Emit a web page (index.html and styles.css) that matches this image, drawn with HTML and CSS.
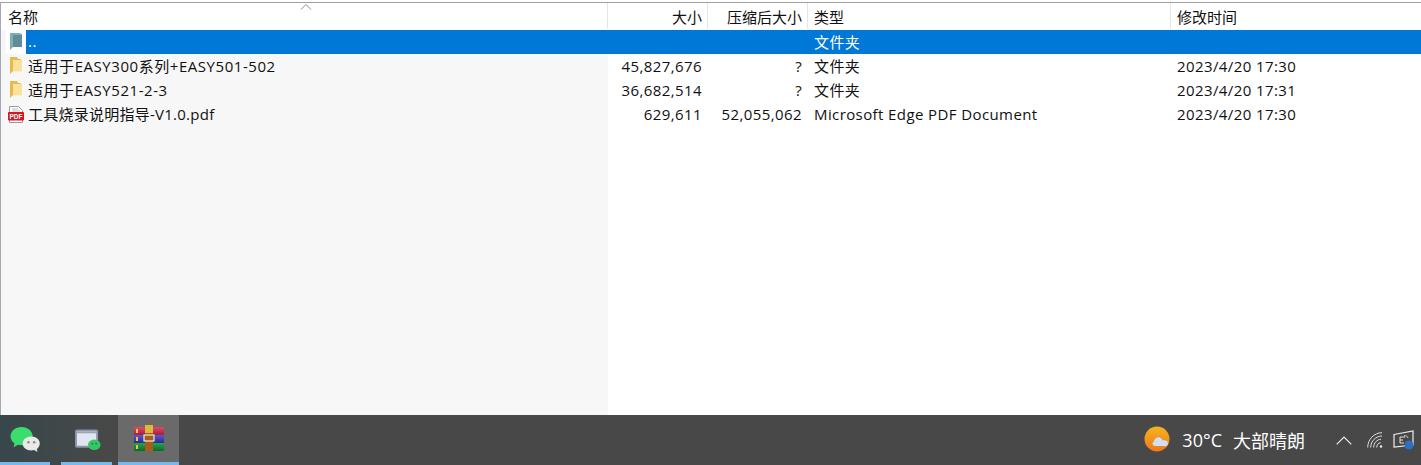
FILE: index.html
```html
<!DOCTYPE html>
<html lang="zh">
<head>
<meta charset="utf-8">
<title>WinRAR</title>
<link rel="stylesheet" href="styles.css">
</head>
<body>
<div class="window">
  <div class="table">
    <div class="row head">
      <div class="cell name">名称<svg class="sort" width="12" height="7" viewBox="0 0 12 7"><path d="M1 6.500 6 1.500l5 5" fill="none" stroke="#8a8a8a"/></svg></div>
      <div class="cell size">大小</div>
      <div class="cell packed">压缩后大小</div>
      <div class="cell type">类型</div>
      <div class="cell time last">修改时间</div>
    </div>
    <div class="row selected">
      <div class="cell name">
        <span class="icon-box"><svg class="folder" width="12" height="18" viewBox="0 0 12 18"><path d="M0 0h9l3 1v13H3l-3 3z" fill="#7fb0ae"/><path d="M3 2h9v12H3z" fill="#5f8e9a"/></svg></span>
        <span class="label">..</span>
      </div>
      <div class="cell size"></div>
      <div class="cell packed"></div>
      <div class="cell type cjk">文件夹</div>
      <div class="cell time last"></div>
    </div>
    <div class="row">
      <div class="cell name">
        <span class="icon-box"><svg class="folder" width="12" height="18" viewBox="0 0 12 18"><path d="M0 0h7l1 2h3v12H3l-3 3z" fill="#e9b84f"/><path d="M3 3h9v11.500H3z" fill="#fbe29c"/></svg></span>
        <span class="label">适用于EASY300系列+EASY501-502</span>
      </div>
      <div class="cell size">45,827,676</div>
      <div class="cell packed">?</div>
      <div class="cell type cjk">文件夹</div>
      <div class="cell time last">2023/4/20 17:30</div>
    </div>
    <div class="row">
      <div class="cell name">
        <span class="icon-box"><svg class="folder" width="12" height="18" viewBox="0 0 12 18"><path d="M0 0h7l1 2h3v12H3l-3 3z" fill="#e9b84f"/><path d="M3 3h9v11.500H3z" fill="#fbe29c"/></svg></span>
        <span class="label">适用于EASY521-2-3</span>
      </div>
      <div class="cell size">36,682,514</div>
      <div class="cell packed">?</div>
      <div class="cell type cjk">文件夹</div>
      <div class="cell time last">2023/4/20 17:31</div>
    </div>
    <div class="row">
      <div class="cell name">
        <span class="icon-box"><svg width="16" height="17" viewBox="0 0 16 17"><path d="M1.500.5h9l4 4V16.500h-13z" fill="#fff" stroke="#999"/><path d="M4 3h6M4 5h8" stroke="#bbb"/><rect y="6" width="16" height="8.500" rx="1" fill="#d8141c"/><text x="8" y="12.800" class="pdf-tag">PDF</text></svg></span>
        <span class="label tight">工具烧录说明指导-V1.0.pdf</span>
      </div>
      <div class="cell size">629,611</div>
      <div class="cell packed">52,055,062</div>
      <div class="cell type">Microsoft Edge PDF Document</div>
      <div class="cell time last">2023/4/20 17:30</div>
    </div>
    <div class="filler"></div>
  </div>
  <div class="taskbar">
    <div class="task first">
      <svg class="wechat" width="33" height="27" viewBox="0 0 34 28"><path d="M13 2C6.500 2 1.500 6.300 1.500 11.700c0 3 1.600 5.600 4.100 7.400L4.600 23l4.700-2.400c1.200.3 2.400.5 3.700.5 6.500 0 11.500-4.300 11.500-9.400S19.500 2 13 2z" fill="#3ddc6e"/><path d="M23 12c-5 0-9 3.200-9 7.200s4 7.200 9 7.200c1 0 2-.1 2.900-.4l3.600 1.900-.8-3c1.900-1.400 3.100-3.400 3.100-5.700 0-4-3.900-7.200-8.800-7.200z" fill="#e9e9e6"/><circle cx="20" cy="18" r="1.300" fill="#8a8a8a"/><circle cx="26" cy="18" r="1.300" fill="#8a8a8a"/></svg>
    </div>
    <div class="task second">
      <svg class="chat-window" width="26" height="22" viewBox="0 0 27 22"><rect x="1" y="1" width="22" height="17" rx="1" fill="#dfe5f1" stroke="#8c93a8" stroke-width="2"/><rect x="2" y="2" width="20" height="2" fill="#9da4b8"/><ellipse cx="20" cy="16" rx="6.500" ry="5.500" fill="#36c765"/><circle cx="18" cy="15" r=".8" fill="#14602f"/><circle cx="22" cy="15" r=".8" fill="#14602f"/></svg>
    </div>
    <div class="task current">
      <svg class="rar" width="30" height="27" viewBox="0 0 30 27"><defs><linearGradient id="r" x1="0" y1="0" x2="0" y2="1"><stop offset="0" stop-color="#e04a6a"/><stop offset="1" stop-color="#a81c3c"/></linearGradient><linearGradient id="b" x1="0" y1="0" x2="0" y2="1"><stop offset="0" stop-color="#5a58cc"/><stop offset="1" stop-color="#2a2a90"/></linearGradient><linearGradient id="g" x1="0" y1="0" x2="0" y2="1"><stop offset="0" stop-color="#1fa84c"/><stop offset="1" stop-color="#0b6a2c"/></linearGradient></defs><rect y="2" width="30" height="8" rx="1" fill="url(#r)"/><rect y="10" width="30" height="8" fill="url(#b)"/><rect y="18" width="30" height="8" rx="1" fill="url(#g)"/><rect x="2" y="4" width="2" height="4" fill="#f3c53a"/><rect x="2" y="12" width="2" height="4" fill="#f3c53a"/><rect x="2" y="20" width="2" height="4" fill="#f3c53a"/><rect x="11" y="2" width="8" height="24" fill="#a85e18"/><rect x="11" y="0" width="8" height="8" fill="#d9bb3a"/><rect x="10" y="10" width="10" height="6" fill="#a85e18" stroke="#e8e8e8" stroke-width="1.200"/></svg>
    </div>
    <div class="tray">
      <svg class="weather" width="28" height="28" viewBox="0 0 28 28"><defs><linearGradient id="sun" x1="0" y1="0" x2="0" y2="1"><stop offset="0" stop-color="#f4b41f"/><stop offset="1" stop-color="#f0781a"/></linearGradient></defs><circle cx="13" cy="13" r="12.500" fill="url(#sun)"/><path d="M11 20c-2.500 0-3.500-3.500-1-4.500.3-3 3-4.800 5.700-4 1.300.4 2.300 1.400 2.800 2.700 3 0 5.500.5 5.500 3s-1.500 2.800-3 2.800z" fill="#cfdff5"/></svg>
      <span class="temp">30°C</span>
      <span class="sky">大部晴朗</span>
      <svg class="chev" width="16" height="9" viewBox="0 0 16 9"><path d="M.7 8.300 8 1l7.300 7.300" fill="none" stroke="#eee" stroke-width="1.200"/></svg>
      <svg class="wifi" width="16" height="16" viewBox="0 0 16 16"><g fill="none" stroke="#ddd"><path d="M.7 15.500C.7 7.500 7 .7 15 .7"/><path d="M3.700 15.500C3.700 9 9 4 15 4"/><path d="M6.700 15.500C6.700 11 10 7.300 14 7.300"/><path d="M9.700 15.500c0-2.500 1.500-4.800 4-4.800"/></g><circle cx="14" cy="14.500" r="1.200" fill="#eee"/></svg>
      <svg class="net" width="22" height="20" viewBox="0 0 22 20"><path d="M1 4.500 20 1v14L1 17z" fill="none" stroke="#eee" stroke-width="1.200"/><path d="M7 7h5M7 7v6h4M7 10h3" fill="none" stroke="#ddd"/><path d="M11 6a3 3 0 0 1 4 2" fill="none" stroke="#ddd"/><circle cx="16" cy="15" r="4.500" fill="#2d6fc0"/></svg>
    </div>
  </div>
</div>
</body>
</html>
```
FILE: styles.css
```css
* { box-sizing: border-box; }
html, body { margin: 0; height: 100%; background: #fff; overflow: hidden; }
body { font-family: "Open Sans", "Noto Sans CJK SC", sans-serif; font-size: 15px; color: #111; }
.window { width: 1421px; height: 465px; display: flex; flex-direction: column; }
.table { flex: 1; display: flex; flex-direction: column; border-top: 1px solid #a0a0a0; margin-top: 2px; border-left: 1px solid #a8a8b4; background: linear-gradient(to right, #f7f7f7 607px, #fff 607px); min-height: 0; }
.row { display: flex; height: 24px; align-items: center; letter-spacing: 0.4px; }
.head { height: 27px; background: #fff; letter-spacing: 0; padding-bottom: 1px; }
.cell { height: 100%; display: flex; align-items: center; white-space: nowrap; padding: 0 5px 0 6px; }
.cjk { padding-bottom: 2px; }
.name { width: 607px; position: relative; padding-left: 7px; gap: 4px; }
.size { width: 100px; justify-content: flex-end; }
.packed { width: 100px; justify-content: flex-end; }
.row:not(.head) .size, .row:not(.head) .packed { padding-right: 6px; }
.type { width: 363px; }
.time { flex: 1; }
.head .cell { border-right: 1px solid #e5e5e5; }
.head .last { border-right: none; }
.sort { position: absolute; left: 299px; top: 0; }
.icon-box { width: 16px; height: 24px; display: flex; align-items: center; justify-content: center; flex: none; }
.folder { margin-right: 1px; }
.label { letter-spacing: 0.55px; padding-bottom: 2px; }
.label.tight { letter-spacing: 0.25px; }
.selected { background: #0078d7; color: #fff; }
.selected .name { padding: 0; gap: 0; background: linear-gradient(to right, #f7f7f7 5px, #fff 5px, #fff 25px, #0078d7 25px); }
.selected .icon-box { width: 25px; padding-left: 5px; }
.selected .label { padding-left: 2px; }
.pdf-tag { font: 700 6.500px "Liberation Sans", sans-serif; fill: #fff; text-anchor: middle; letter-spacing: 0; }
.filler { flex: 1; }
.taskbar { height: 50px; flex: none; display: flex; background: linear-gradient(to right, #37474b, #484848 110px); color: #fff; }
.task { display: flex; align-items: center; justify-content: center; padding-bottom: 2px; border-bottom: 3px solid #76b9ed; }
.first { width: 50px; margin-right: 11px; }
.second { width: 51px; margin-right: 6px; }
.current { width: 61px; background: #6a6a6a; }
.wechat { margin: 2px 0 0 0; }
.chat-window { margin: 4px 0 0 2px; }
.rar { margin-top: 2px; }
.tray { margin-left: auto; display: flex; align-items: center; padding-right: 6px; }
.weather { margin-right: 10px; }
.temp { font-size: 18px; margin-right: 11px; }
.sky { font-size: 18px; margin-right: 31px; }
.chev { margin-right: 15px; }
.wifi { margin-right: 10px; }
```
